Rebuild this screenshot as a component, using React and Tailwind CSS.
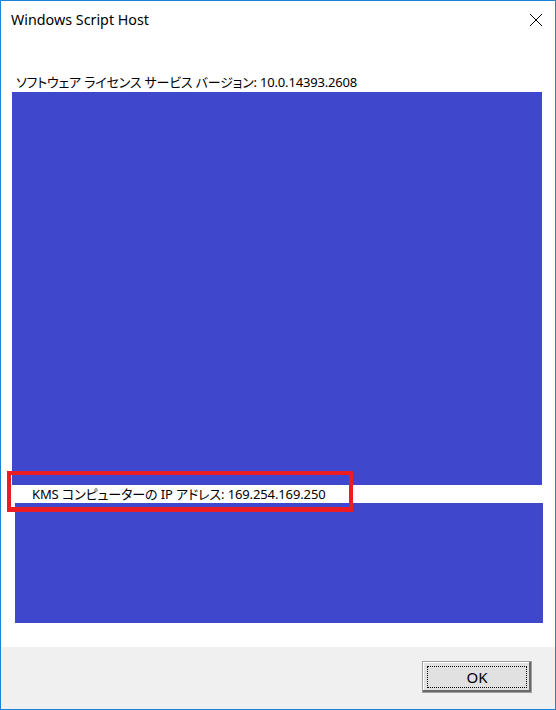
export default function App() {
  const font = "font-['Noto_Sans','Noto_Sans_CJK_JP',sans-serif] [font-feature-settings:'palt']";
  return (
    <div className={`relative w-[556px] h-[710px] border border-[#1883d7] bg-white flex flex-col text-black ${font}`}>
      {/* Title bar */}
      <div className="h-[38px] flex items-start justify-between">
        <div className="pl-[10px] pt-[9px] text-[14.3px] leading-[20px]">Windows Script Host</div>
        <div className="pt-[12px] pr-[12px]">
          <svg width="14" height="14" viewBox="0 0 14 14">
            <path d="M1 1 L13 13 M13 1 L1 13" stroke="#000" strokeWidth="1" fill="none" />
          </svg>
        </div>
      </div>
      {/* Content */}
      <div className="flex-1 flex flex-col pt-[33px]">
        <div className="pl-[15px] text-[13px] leading-[20px] tracking-[-0.18px]">
          ソフトウェア ライセンス サービス バージョン: 10.0.14393.2608
        </div>
        <div className="ml-[11px] mr-[13px] h-[393px] bg-[#3f48cc]" />
        <div className="h-[18px] pl-[31px] text-[13px] leading-[18px] tracking-[-0.12px]">
          KMS コンピューターの IP アドレス: 169.254.169.250
        </div>
        <div className="ml-[14px] mr-[12px] h-[120px] bg-[#3f48cc]" />
      </div>
      {/* Footer */}
      <div className="h-[62px] bg-[#f0f0f0] flex items-start justify-end pt-[14px] pr-[23px]">
        <button className="w-[110px] h-[32px] border border-[#a0a0a0] bg-[#e1e1e1] shadow-[inset_-2px_-2px_0_#696969,inset_1px_1px_0_#ffffff] flex items-center justify-center p-[4px]">
          <span className="w-full h-full border border-dotted border-black flex items-center justify-center text-[15px] leading-none">OK</span>
        </button>
      </div>
      {/* Red highlight */}
      <div className="absolute left-[6px] top-[470px] w-[346px] h-[41px] border-4 border-b-[5px] border-[#ed1c24]" />
    </div>
  );
}
